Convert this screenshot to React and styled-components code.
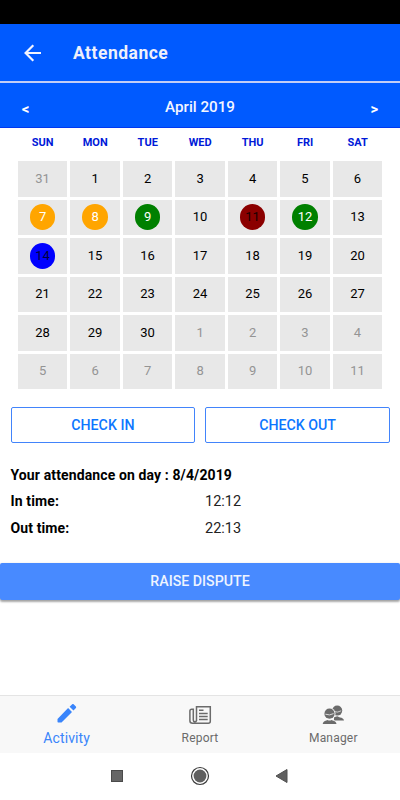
import React, { useState } from "react";
import styled, { createGlobalStyle } from "styled-components";

const GlobalStyle = createGlobalStyle`
  * {
    box-sizing: border-box;
  }

  body {
    margin: 0;
    background-color: #fff;
    font-family: Roboto, "Liberation Sans", sans-serif;
  }

  button {
    font-family: inherit;
    padding: 0;
    cursor: pointer;
  }
`;

const Screen = styled.div`
  width: 400px;
  height: 800px;
  display: flex;
  flex-direction: column;
  background-color: #fff;
  overflow: hidden;
`;

const StatusBar = styled.div`
  height: 24px;
  flex: none;
  background-color: #000;
`;

const Header = styled.header`
  height: 59px;
  flex: none;
  display: flex;
  align-items: center;
  gap: 29px;
  padding-left: 21px;
  background-color: #005aff;
  border-bottom: 2px solid #c3cdf6;
`;

const BackButton = styled.button`
  width: 23px;
  height: 24px;
  display: flex;
  border: none;
  background: none;
`;

const Title = styled.h1`
  margin: 0;
  color: #eef0fb;
  font-size: 17.5px;
  line-height: 24px;
  font-weight: 700;
  letter-spacing: 0.5px;
`;

const MonthBar = styled.div`
  height: 45px;
  flex: none;
  display: flex;
  align-items: center;
  justify-content: space-between;
  padding: 4px 20px 0;
  background-color: #005aff;
  border-bottom: 1px solid #0038f0;
  color: #fff;
`;

const MonthName = styled.span`
  font-size: 15.2px;
  font-weight: 500;
  color: #f4f6ff;
`;

const MonthArrow = styled.button`
  width: 11px;
  padding-top: 3px;
  border: none;
  background: none;
  color: #fff;
  font-size: 15px;
  line-height: 18px;
  font-weight: 700;
`;

const WeekDays = styled.div`
  height: 33px;
  flex: none;
  display: grid;
  grid-template-columns: repeat(7, 1fr);
  column-gap: 3px;
  padding: 8px 17.6px 0 18px;
`;

const WeekDay = styled.span`
  color: #0019d8;
  font-size: 11px;
  line-height: 14px;
  font-weight: 700;
  text-align: center;
`;

const Days = styled.div`
  flex: none;
  display: grid;
  grid-template-columns: repeat(7, 1fr);
  grid-auto-rows: 35.5px;
  gap: 3px;
  padding: 0 17.6px 0 18px;
`;

const DayCell = styled.div`
  display: flex;
  align-items: center;
  justify-content: center;
  padding-right: 0.3px;
  background-color: #e8e8e8;
`;

const Day = styled.span`
  width: 25.6px;
  height: 25.6px;
  border-radius: 50%;
  background-color: ${(props) => props.$bg || "transparent"};
  color: ${(props) => props.$color || "#000"};
  font-size: 13px;
  line-height: 26px;
  text-align: center;
`;

const CheckButtons = styled.div`
  flex: none;
  display: flex;
  gap: 10px;
  padding: 18px 10px 0 10.5px;
`;

const OutlineButton = styled.button`
  flex: 1;
  height: 36px;
  border: 1px solid #4284fb;
  border-radius: 2px;
  background-color: #fff;
  color: #0d76ff;
  font-size: 14.2px;
  font-weight: 500;
`;

const Details = styled.section`
  flex: none;
  padding: 19px 10.5px 0;
  color: #000;
  font-size: 14px;
`;

const DetailsTitle = styled.div`
  line-height: 26px;
  font-weight: 700;
  letter-spacing: 0.12px;
`;

const DetailsRow = styled.div`
  display: grid;
  grid-template-columns: 194.5px 1fr;
  line-height: 27px;
`;

const Label = styled.span`
  font-weight: 700;
  letter-spacing: 0.12px;
`;

const Value = styled.span`
  font-size: 14.5px;
  color: #222;
`;

const DisputeButton = styled.button`
  flex: none;
  height: 37px;
  margin-top: 21px;
  padding-bottom: 2px;
  border: none;
  border-radius: 2px;
  background-color: #488aff;
  box-shadow: 0 2px 2px rgba(0, 0, 0, 0.25), 0 1px 3px rgba(0, 0, 0, 0.2);
  color: #eef4ff;
  font-size: 14.2px;
  font-weight: 500;
`;

const TabBar = styled.nav`
  height: 58px;
  flex: none;
  display: grid;
  grid-template-columns: repeat(3, 1fr);
  margin-top: auto;
  background-color: #f8f8f8;
  border-top: 1px solid #e4e4e4;
`;

const Tab = styled.button`
  display: flex;
  flex-direction: column;
  align-items: center;
  padding-top: 7px;
  border: none;
  background: none;
  color: ${(props) => (props.$active ? "#3a85fb" : "#6b6b6b")};
`;

const TabLabel = styled.span`
  margin-top: 2px;
  font-size: ${(props) => (props.$active ? "14px" : "12px")};
  line-height: 18px;
  letter-spacing: ${(props) => (props.$active ? "0.1px" : "0.2px")};
`;

const NavBar = styled.div`
  height: 47px;
  flex: none;
  display: flex;
  align-items: center;
  justify-content: center;
  gap: 63px;
  padding-bottom: 1px;
  background-color: #fff;
`;

const BackIcon = () => (
  <svg width="23" height="24" viewBox="0 0 23 24" fill="none">
    <path
      d="M20 12H5M12.300 4.300L4.600 12l7.700 7.700"
      stroke="#f2f4ff"
      strokeWidth="2.200"
    />
  </svg>
);

const PencilIcon = () => (
  <svg width="24" height="24" viewBox="0 1 24 24" fill="currentColor">
    <path d="M2.500 17v2.800c0 .4.300.700.700.700H6.500L17 9.900 13.100 6zM20.900 6c.4-.4.4-1 0-1.400l-2.300-2.300c-.4-.4-1-.4-1.400 0L14.600 4.700l3.900 3.900z" />
  </svg>
);

const PaperIcon = () => (
  <svg
    width="24"
    height="24"
    viewBox="0 0 24 24"
    fill="none"
    stroke="currentColor"
    strokeWidth="1.500"
  >
    <path d="M8.500 18V3.800H22.300V18.200q0 2-2 2H4.500q-2.600 0-2.600-2.500V8q0-1.800 1.800-1.800H5.300V17q0 1.800 1.600 1.800t1.600-1.500" />
    <path d="M11 7.200H15.500M11 10.400H19.700M11 13.500H19.700M11 16.600H19.700" />
  </svg>
);

// the front person is drawn over a light outline that separates the two
const PeopleIcon = () => (
  <svg width="24" height="24" viewBox="0 0 24 24" fill="currentColor">
    <circle cx="16.200" cy="7.600" r="5" />
    <path d="M13 17.500v-3.200l3.200-1 2.800 1.300q3.400.5 4 2.900z" />
    <path d="M13 8.600q3.600 1.300 7.200-.8" fill="none" stroke="#f8f8f8" strokeWidth="0.700" />
    <circle cx="8.500" cy="10.700" r="6" fill="#f8f8f8" />
    <circle cx="8.500" cy="10.700" r="5.100" />
    <path
      d="M1.700 21.100q.4-2.700 3.600-3.500l1.200-.5q2 1 4 0l1.200.5q3.400.8 3.800 3.500z"
      stroke="#f8f8f8"
      strokeWidth="1.200"
      paintOrder="stroke"
    />
    <path d="M4.400 11.200q4.100 1.700 8.200-.6" fill="none" stroke="#f8f8f8" strokeWidth="0.800" />
  </svg>
);

const weekDays = ["SUN", "MON", "TUE", "WED", "THU", "FRI", "SAT"];

const marks = {
  7: { bg: "#ffa500", color: "#fff" },
  8: { bg: "#ffa500", color: "#fff" },
  9: { bg: "#008000", color: "#fff" },
  11: { bg: "#8b0000", color: "#180000" },
  12: { bg: "#008000", color: "#fff" },
  14: { bg: "#0000ff", color: "#000038" },
};

// 31 march, the 30 days of april and the first 11 of may
const days = [
  { number: 31, outside: true },
  ...Array.from({ length: 30 }, (_, i) => ({ number: i + 1 })),
  ...Array.from({ length: 11 }, (_, i) => ({ number: i + 1, outside: true })),
];

const tabs = [
  { name: "Activity", Icon: PencilIcon },
  { name: "Report", Icon: PaperIcon },
  { name: "Manager", Icon: PeopleIcon },
];

const Calendar = () => (
  <>
    <MonthBar>
      <MonthArrow>&lt;</MonthArrow>
      <MonthName>April 2019</MonthName>
      <MonthArrow>&gt;</MonthArrow>
    </MonthBar>
    <WeekDays>
      {weekDays.map((day) => (
        <WeekDay key={day}>{day}</WeekDay>
      ))}
    </WeekDays>
    <Days>
      {days.map((day, i) => {
        const mark = day.outside ? null : marks[day.number];
        return (
          <DayCell key={i}>
            <Day
              $bg={mark?.bg}
              $color={day.outside ? "#949494" : mark?.color}
            >
              {day.number}
            </Day>
          </DayCell>
        );
      })}
    </Days>
  </>
);

const App = () => {
  const [active, setActive] = useState("Activity");

  return (
    <Screen>
      <GlobalStyle />
      <StatusBar />
      <Header>
        <BackButton>
          <BackIcon />
        </BackButton>
        <Title>Attendance</Title>
      </Header>
      <Calendar />
      <CheckButtons>
        <OutlineButton>CHECK IN</OutlineButton>
        <OutlineButton>CHECK OUT</OutlineButton>
      </CheckButtons>
      <Details>
        <DetailsTitle>Your attendance on day : 8/4/2019</DetailsTitle>
        <DetailsRow>
          <Label>In time:</Label>
          <Value>12:12</Value>
        </DetailsRow>
        <DetailsRow>
          <Label>Out time:</Label>
          <Value>22:13</Value>
        </DetailsRow>
      </Details>
      <DisputeButton>RAISE DISPUTE</DisputeButton>
      <TabBar>
        {tabs.map(({ name, Icon }) => (
          <Tab
            key={name}
            $active={name === active}
            onClick={() => setActive(name)}
          >
            <Icon />
            <TabLabel $active={name === active}>{name}</TabLabel>
          </Tab>
        ))}
      </TabBar>
      <NavBar>
        <svg width="20" height="20" viewBox="0 0 20 20">
          <rect x="4.500" y="4.500" width="11" height="11" fill="#666" stroke="#4a4a4a" />
        </svg>
        <svg width="20" height="20" viewBox="0 0 20 20">
          <circle cx="10" cy="10" r="8.500" fill="none" stroke="#3c3c3c" strokeWidth="1.200" />
          <circle cx="10" cy="10" r="6.400" fill="#606060" />
        </svg>
        <svg width="20" height="20" viewBox="0 0 20 20">
          <path d="M3 10L14 3.500v13z" fill="#606060" stroke="#505050" />
        </svg>
      </NavBar>
    </Screen>
  );
};

export default App;
